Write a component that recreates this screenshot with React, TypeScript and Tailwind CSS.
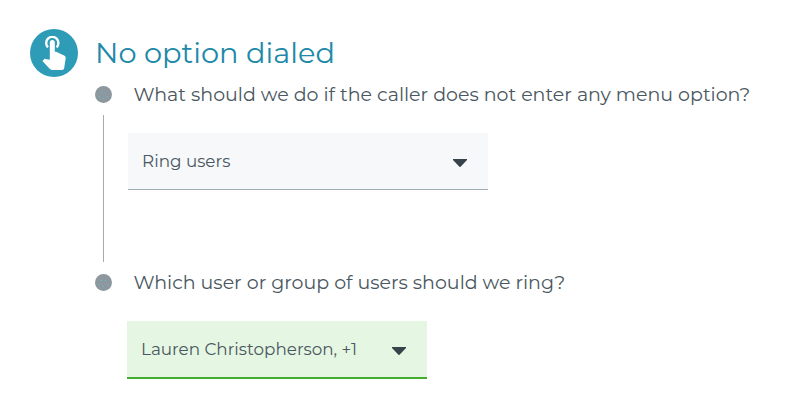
const FONT = "font-['Montserrat','Inter',sans-serif]";

function TouchIcon() {
  return (
    <svg viewBox="0 0 24 35" className="mt-px h-[35px] w-6 shrink-0" fill="#fff">
      <path
        d="M6 11.3A6.1 6.1 0 1 1 14.6 11.3"
        fill="none"
        stroke="#fff"
        strokeWidth="2.4"
      />
      <path d="M7.8 6.6a2.5 2.5 0 0 1 5 0v9.2h1.4l7.9 3.6c1.3.6 1.8 1.5 1.6 2.8l-1.5 9.8c-.2 1.2-.9 1.9-2.2 1.9H9.8c-.8 0-1.4-.3-1.9-.8L.4 24.9 1.8 23.4c.5-.5 1-.6 1.6-.5l4.4.9z" />
    </svg>
  );
}

function Caret() {
  return (
    <svg viewBox="0 0 14 8" className="mt-1 h-2 w-3.5 shrink-0" fill="#37424a">
      <path d="M0 0h14v1L7.8 7.6a1.1 1.1 0 0 1-1.6 0L0 1z" />
    </svg>
  );
}

function StepDot() {
  return (
    <svg viewBox="0 0 17 17" className="h-[17px] w-[17px] shrink-0">
      <circle cx="8.5" cy="8.5" r="8.5" fill="#8c979e" />
      <g fill="#5bbfe0">
        <rect x="6" y="6" width="1" height="1" />
        <rect x="10" y="6" width="1" height="1" />
        <rect x="4" y="10" width="1" height="1" />
        <rect x="8" y="12" width="1" height="1" />
        <rect x="12" y="10" width="1" height="1" />
      </g>
    </svg>
  );
}

export default function App() {
  return (
    <main className={`h-[403px] w-[804px] overflow-hidden bg-white pt-[29px] pl-[30px] text-[#4a5760] ${FONT}`}>
      <header className="flex h-12 items-center gap-[17px]">
        <div className="flex h-12 w-12 shrink-0 items-center justify-center rounded-full bg-[#2e9bb7]">
          <TouchIcon />
        </div>
        <h1 className="text-[28.8px] leading-12 font-normal whitespace-nowrap text-[#2089a8]">
          No option dialed
        </h1>
      </header>

      <section className="flex pt-[9px] pl-[65px]">
        <div className="flex w-[17px] flex-col items-center">
          <StepDot />
          <div className="mt-3 h-[147px] w-px bg-[#a4acb0]" />
        </div>
        <div>
          <p className="ml-[21.5px] h-[17px] text-[19px] leading-[17px] whitespace-nowrap">
            What should we do if the caller does not enter any menu option?
          </p>
          <button
            type="button"
            className="mt-[30px] ml-4 flex h-[57px] w-[360px] items-center justify-between border-b border-[#a1adb5] bg-[#f7f8fa] pr-[21px] pl-3.5"
          >
            <span className="pt-px text-[16.8px]">Ring users</span>
            <Caret />
          </button>
        </div>
      </section>

      <section className="flex pt-3 pl-[65px]">
        <StepDot />
        <div>
          <p className="ml-[21.5px] h-[17px] text-[19px] leading-[17px] whitespace-nowrap">
            Which user or group of users should we ring?
          </p>
          <button
            type="button"
            className="mt-[30px] ml-[15px] flex h-[58px] w-[300px] items-center justify-between border-b-2 border-[#43ad2f] bg-[#e5f6e3] pr-[21px] pl-3.5"
          >
            <span className="pt-px text-[16.8px]">Lauren Christopherson, +1</span>
            <Caret />
          </button>
        </div>
      </section>
    </main>
  );
}
